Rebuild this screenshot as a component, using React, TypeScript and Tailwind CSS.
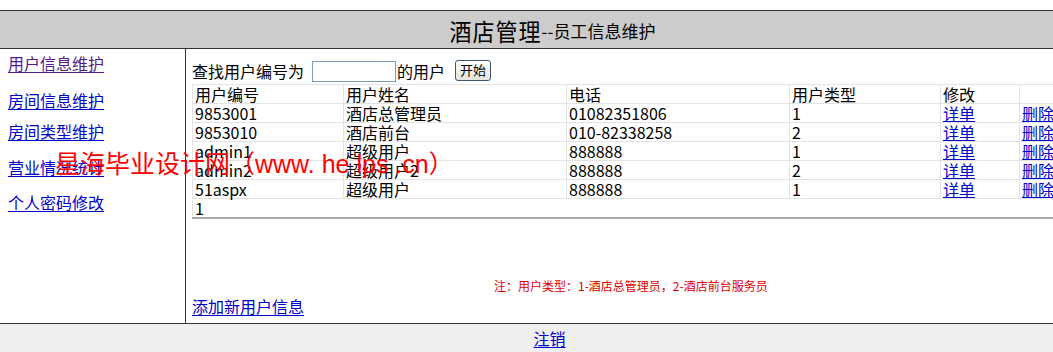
import React from "react";

const rows = [
  ["9853001", "酒店总管理员", "01082351806", "1"],
  ["9853010", "酒店前台", "010-82338258", "2"],
  ["admin1", "超级用户", "888888", "1"],
  ["admin2", "超级用户2", "888888", "2"],
  ["51aspx", "超级用户", "888888", "1"],
];

const td = "border border-[#e3e3e3] px-[2px] py-0 whitespace-nowrap align-middle leading-[18px]";

export default function App() {
  return (
    <div className="relative w-[1053px] h-[352px] overflow-hidden bg-white text-black font-['Noto_Sans_CJK_SC',sans-serif] text-[16px] leading-[19px]">
      <div className="h-[10px]" />
      <div className="h-[39px] border-y border-[#333] bg-[#cccccc] flex items-center justify-center pl-[52px]">
        <span className="text-[22px] leading-[24px] tracking-[1px] scale-y-110">酒店管理</span>
        <span className="text-[17px] leading-[20px] mt-[3px]">--员工信息维护</span>
      </div>
      <div className="flex h-[274px]">
        <div className="w-[186px] shrink-0 border-r border-[#333] pl-[8px] pt-[5px] flex flex-col">
          <a className="text-[#551a8b] underline underline-offset-2">用户信息维护</a>
          <a className="mt-[18px] text-[#0000cc] underline underline-offset-2">房间信息维护</a>
          <a className="mt-[12px] text-[#0000cc] underline underline-offset-2">房间类型维护</a>
          <a className="mt-[17px] text-[#0000cc] underline underline-offset-2">营业情况统计</a>
          <a className="mt-[16px] text-[#0000cc] underline underline-offset-2">个人密码修改</a>
        </div>
        <div className="flex-1 overflow-hidden pl-[6px] flex flex-col">
          <div className="flex items-center h-[35px] pt-[10px] shrink-0">
            <span>查找用户编号为</span>
            <div className="ml-[8px] w-[84px] h-[21px] border border-[#7f9db9] bg-white" />
            <span className="ml-[1px]">的用户</span>
            <div className="ml-[10px] mb-[2px] w-[36px] h-[21px] border border-[#3c5877] rounded-[3px] bg-gradient-to-b from-white to-[#e4e4dc] text-[13px] leading-[17px] flex justify-center">开始</div>
          </div>
          <table className="w-[906px] border-collapse shrink-0 table-fixed">
            <colgroup>
              <col className="w-[151px]" />
              <col className="w-[223px]" />
              <col className="w-[223px]" />
              <col className="w-[151px]" />
              <col className="w-[79px]" />
              <col className="w-[79px]" />
            </colgroup>
            <tbody>
              <tr>
                {["用户编号", "用户姓名", "电话", "用户类型", "修改", ""].map((h, i) => (
                  <td key={i} className={td}>{h}</td>
                ))}
              </tr>
              {rows.map((r, i) => (
                <tr key={i}>
                  {r.map((c, j) => (
                    <td key={j} className={td}>{c}</td>
                  ))}
                  <td className={td}><a className="text-[#0000cc] underline">详单</a></td>
                  <td className={td}><a className="text-[#0000cc] underline">删除</a></td>
                </tr>
              ))}
              <tr>
                <td colSpan={6} className="border-x border-t border-[#e3e3e3] border-b-2 border-b-[#a8a8a8] px-[2px] py-0 leading-[18px]">1</td>
              </tr>
            </tbody>
          </table>
          <div className="mt-[59px] pl-[302px] text-[12px] leading-[16px] text-[#dd0000] shrink-0">注：用户类型：1-酒店总管理员，2-酒店前台服务员</div>
          <a className="mt-[3px] text-[#0000cc] underline underline-offset-2 self-start shrink-0">添加新用户信息</a>
        </div>
      </div>
      <div className="h-[29px] border-t border-[#333] bg-[#efefef] flex items-center justify-center pl-[46px]">
        <a className="text-[#0000cc] underline underline-offset-2">注销</a>
      </div>
      <div className="absolute left-[55px] top-[148px] text-[25px] leading-[32px] text-[#ff0000] font-['Liberation_Sans','Noto_Sans_CJK_SC',sans-serif] whitespace-nowrap">
        星海毕业设计网（www. he lps .cn）
      </div>
    </div>
  );
}
